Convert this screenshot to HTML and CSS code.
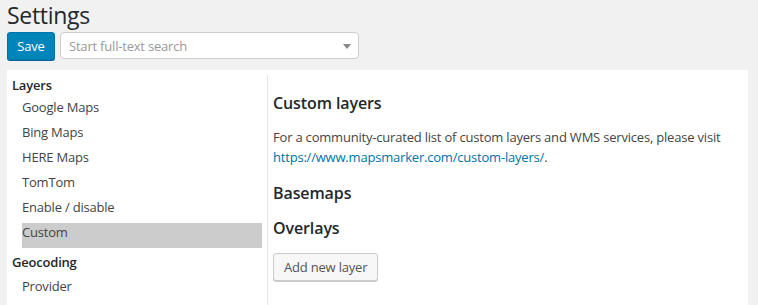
FILE: index.html
```html
<!DOCTYPE html>
<html>
<head>
<meta charset="utf-8">
<link rel="stylesheet" href="styles.css">
</head>
<body>
<div class="wrap">
  <h1 class="title">Settings</h1>
  <div class="toolbar">
    <button class="btn-primary">Save</button>
    <div class="search">
      <span class="placeholder">Start full-text search</span>
      <span class="arrow"></span>
    </div>
  </div>
  <div class="panel">
    <nav class="sidebar">
      <div class="group">Layers</div>
      <div class="item">Google Maps</div>
      <div class="item">Bing Maps</div>
      <div class="item">HERE Maps</div>
      <div class="item">TomTom</div>
      <div class="item">Enable / disable</div>
      <div class="item active">Custom</div>
      <div class="group second">Geocoding</div>
      <div class="item">Provider</div>
    </nav>
    <main class="content">
      <h2 class="heading first">Custom layers</h2>
      <p class="desc">For a community-curated list of custom layers and WMS services, please visit <a href="#">https://www.mapsmarker.com/custom-layers/</a>.</p>
      <h2 class="heading">Basemaps</h2>
      <h2 class="heading">Overlays</h2>
      <button class="btn">Add new layer</button>
    </main>
  </div>
</div>
</body>
</html>
```
FILE: styles.css
```css
html, body {
  margin: 0;
  padding: 0;
  background: #f1f1f1;
  height: 305px;
  overflow: hidden;
}
body {
  font-family: "Open Sans", "Noto Sans", sans-serif;
  font-size: 13px;
  letter-spacing: -0.2px;
  color: #444;
}
.wrap {
  padding: 0 10px 0 7px;
}
.title {
  margin: 0;
  font-size: 23px;
  font-weight: 400;
  letter-spacing: -0.3px;
  color: #23282d;
  line-height: 30px;
  height: 32px;
}
.toolbar {
  display: flex;
  gap: 5px;
  height: 28px;
  margin-bottom: 10px;
}
.btn-primary {
  width: 48px;
  height: 28px;
  background: #0085ba;
  border: 1px solid #0073aa;
  border-radius: 3px;
  color: #fff;
  font-family: inherit;
  font-size: 13px;
  letter-spacing: -0.2px;
  padding: 0;
  box-shadow: 0 1px 0 #006799;
}
.search {
  width: 299px;
  height: 27px;
  box-sizing: border-box;
  border: 1px solid #ccc;
  border-radius: 4px;
  background: #fff;
  display: flex;
  align-items: center;
  justify-content: space-between;
  padding: 0 7px 0 8px;
}
.placeholder {
  color: #999;
}
.arrow {
  width: 0;
  height: 0;
  border-left: 4px solid transparent;
  border-right: 4px solid transparent;
  border-top: 5px solid #888;
  margin-top: 1px;
}
.panel {
  background: #fff;
  display: flex;
  height: 240px;
}
.sidebar {
  box-sizing: border-box;
  width: 261px;
  flex: none;
  padding: 1px 5px 0 5px;
  border-right: 1px solid #e5e5e5;
  margin-top: 5px;
}
.group {
  font-weight: 600;
  color: #23282d;
  height: 18px;
  line-height: 18px;
  margin-bottom: 4px;
}
.group.second {
  margin-top: 5px;
  margin-bottom: 6px;
}
.item {
  margin-left: 10px;
  height: 25px;
  line-height: 18px;
}
.item.active {
  background: #ccc;
}
.content {
  padding: 0 5px;
  flex: 1;
}
.heading {
  margin: 15px 0 0;
  font-size: 16px;
  font-weight: 600;
  letter-spacing: -0.1px;
  color: #23282d;
  height: 20px;
  line-height: 20px;
}
.heading.first {
  margin-top: 23px;
}
.desc {
  margin: 14px 0 16px;
  line-height: 20px;
}
.desc a {
  color: #0073aa;
  text-decoration: none;
}
.btn {
  margin-top: 15px;
  height: 28px;
  padding: 0 10px;
  background: #f7f7f7;
  border: 1px solid #ccc;
  border-radius: 3px;
  box-shadow: 0 1px 0 #ccc;
  color: #555;
  font-family: inherit;
  font-size: 13px;
  letter-spacing: -0.2px;
}
```
